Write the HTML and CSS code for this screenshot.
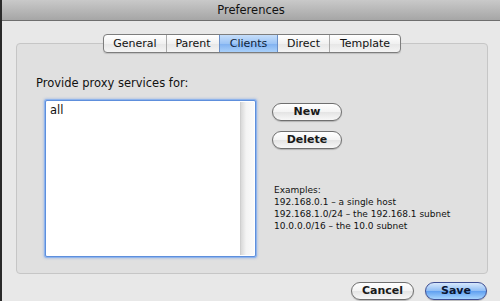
FILE: index.html
```html
<!DOCTYPE html>
<html>
<head>
<meta charset="utf-8">
<link rel="stylesheet" href="styles.css">
</head>
<body>
<div class="window">
  <div class="titlebar">Preferences</div>
  <div class="content">
    <div class="tabs">
      <div class="seg">
        <span class="tab t-general">General</span>
        <span class="tab t-parent">Parent</span>
        <span class="tab t-clients active">Clients</span>
        <span class="tab t-direct">Direct</span>
        <span class="tab t-template">Template</span>
      </div>
    </div>
    <div class="box">
      <div class="label">Provide proxy services for:</div>
      <div class="row">
        <div class="list">
          <div class="list-text">all</div>
          <div class="scroll"></div>
        </div>
        <div class="side">
          <button class="btn">New</button>
          <button class="btn">Delete</button>
          <div class="examples">
            <div>Examples:</div>
            <div>192.168.0.1 – a single host</div>
            <div>192.168.1.0/24 – the 192.168.1 subnet</div>
            <div>10.0.0.0/16 – the 10.0 subnet</div>
          </div>
        </div>
      </div>
    </div>
    <div class="footer">
      <button class="btn fbtn">Cancel</button>
      <button class="btn fbtn save">Save</button>
    </div>
  </div>
</div>
</body>
</html>
```

FILE: styles.css
```css
* { box-sizing: border-box; }
html, body {
  margin: 0;
  padding: 0;
  width: 500px;
  height: 301px;
  overflow: hidden;
  background: #e8e8e8;
  font-family: "DejaVu Sans", "Liberation Sans", sans-serif;
  color: #111;
}
.window {
  height: 301px;
  border-left: 2px solid #2a2a2a;
  background: #e8e8e8;
}
.titlebar {
  height: 21px;
  background: linear-gradient(#c9c9c9, #a6a6a6);
  border-bottom: 1px solid #6e6e6e;
  text-align: center;
  font-size: 11.5px;
  line-height: 20px;
  color: #111;
}
.content {
  padding: 13px 12px 0 14px;
}
.tabs {
  display: flex;
  justify-content: center;
  position: relative;
  z-index: 1;
  height: 19px;
}
.seg {
  display: flex;
  height: 19px;
  border: 1px solid #7d7d7d;
  border-radius: 4px;
  background: linear-gradient(#ffffff, #f1f1f1 50%, #e6e6e6 51%, #f4f4f4);
  box-shadow: 0 1px 1px rgba(0,0,0,0.15);
  overflow: hidden;
}
.tab {
  display: flex;
  align-items: center;
  justify-content: center;
  font-size: 11px;
  height: 17px;
  border-left: 1px solid #a9a9a9;
  color: #111;
}
.tab:first-child { border-left: none; }
.t-general { width: 62px; }
.t-parent { width: 53px; }
.t-clients { width: 58px; }
.t-direct { width: 52px; }
.t-template { width: 71px; }
.tab.active {
  background: linear-gradient(#c6defa, #9cc4f5 50%, #7fb0f0 51%, #a9d0fa);
  border-left-color: #6a8fc7;
  color: #0d1e3a;
}
.tab.active + .tab { border-left-color: #6a8fc7; }
.box {
  margin-top: -10px;
  height: 231px;
  background: #e0e0e0;
  border: 1px solid #c6c6c6;
  border-radius: 4px;
  padding: 32px 0 0 19px;
}
.label {
  font-size: 11.5px;
  line-height: 15px;
  color: #111;
}
.row {
  display: flex;
  margin-top: 9px;
  padding-left: 9px;
}
.list {
  width: 211px;
  height: 157px;
  background: #fff;
  border: 1px solid #5e8fdc;
  border-radius: 2px;
  box-shadow: 0 0 0 1px #8fb4ec, 0 0 2px 2px rgba(120,160,225,0.35);
  display: flex;
  padding: 2px;
}
.list-text {
  flex: 1;
  font-size: 11.5px;
  line-height: 14px;
  padding-left: 2px;
}
.scroll {
  width: 14px;
  background: linear-gradient(90deg, #d9d9d9, #f4f4f4 40%, #fafafa);
  border-left: 1px solid #cfcfcf;
  margin: -1px -1px -1px 0;
}
.side {
  display: flex;
  flex-direction: column;
  align-items: flex-start;
  margin-left: 16px;
  padding-top: 3px;
}
.btn {
  width: 70px;
  height: 18px;
  padding: 0;
  border: 1px solid #6f6f6f;
  border-radius: 9px;
  background: linear-gradient(#ffffff, #f3f3f3 50%, #e4e4e4 51%, #f7f7f7);
  box-shadow: 0 1px 1px rgba(0,0,0,0.2);
  font-family: "DejaVu Sans", "Liberation Sans", sans-serif;
  font-size: 11px;
  font-weight: bold;
  color: #1a1a1a;
  line-height: 16px;
}
.side .btn + .btn { margin-top: 10px; }
.examples {
  margin-top: 35px;
  margin-left: 2px;
  font-size: 9px;
  line-height: 12px;
  color: #111;
}
.footer {
  display: flex;
  justify-content: flex-end;
  gap: 11px;
  padding-top: 8px;
  padding-right: 1px;
}
.fbtn { width: 63px; }
.save {
  width: 62px;
  border-color: #3f4f93;
  background: linear-gradient(#d7e8fc, #8fbdf5 50%, #5f9ff0 51%, #a7d4fd);
  color: #0b1630;
}
```
